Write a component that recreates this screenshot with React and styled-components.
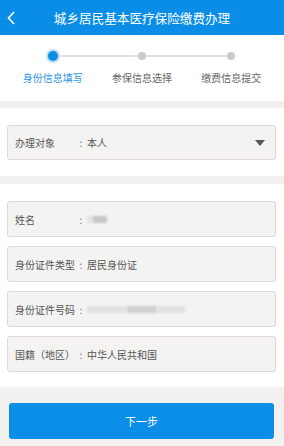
import styled, { createGlobalStyle } from 'styled-components';

const GlobalStyle = createGlobalStyle`
  html, body {
    margin: 0;
    padding: 0;
    background: #f2f1ef;
  }
  body {
    font-family: 'Noto Sans CJK SC', 'Noto Sans', sans-serif;
    color: #555;
  }
`;

const Page = styled.div`
  width: 284px;
  height: 446px;
  display: flex;
  flex-direction: column;
  background: #f2f1ef;
  overflow: hidden;
`;

const Header = styled.div`
  height: 35px;
  flex-shrink: 0;
  background: #0a8de6;
  display: grid;
  grid-template-columns: 30px 1fr 30px;
  align-items: center;
  color: #fff;
`;

const BackButton = styled.div`
  display: flex;
  align-items: center;
  padding-left: 6px;
  height: 100%;
`;

const Title = styled.div`
  text-align: center;
  font-size: 12.6px;
  line-height: 35px;
`;

const Section = styled.div`
  background: ${(p) => (p.$gray ? 'transparent' : '#fff')};
  padding: ${(p) => p.$pad || '17px 8px 16px 7px'};
  margin-bottom: ${(p) => (p.$gray ? '0' : '8px')};
  display: flex;
  flex-direction: column;
  gap: 9px;
`;

const Stepper = styled.div`
  position: relative;
  display: grid;
  grid-template-columns: repeat(3, 1fr);
  padding: 15px 8px 16px;
  background: #fff;
  margin-bottom: 7px;
`;

const Connector = styled.div`
  position: absolute;
  top: 20px;
  left: 52px;
  right: 53px;
  height: 2px;
  background: #e2dfdb;
`;

const Step = styled.div`
  position: relative;
  display: flex;
  flex-direction: column;
  align-items: center;
`;

const DotWrap = styled.div`
  height: 12px;
  display: flex;
  align-items: center;
  justify-content: center;
`;

const Dot = styled.div`
  width: ${(p) => (p.$active ? '10px' : '8px')};
  height: ${(p) => (p.$active ? '10px' : '8px')};
  border-radius: 50%;
  background: ${(p) => (p.$active ? '#0a8de6' : '#ccc8c4')};
  box-shadow: ${(p) => (p.$active ? '0 0 0 2px #bfe0f7' : 'none')};
`;

const StepLabel = styled.div`
  margin-top: 9px;
  font-size: 10px;
  line-height: 14px;
  color: ${(p) => (p.$active ? '#2b95e3' : '#666')};
`;

const Field = styled.div`
  height: ${(p) => p.$h || 36}px;
  box-sizing: border-box;
  border: 1px solid #dcd9d5;
  border-radius: 3px;
  background: #f4f3f1;
  display: flex;
  align-items: center;
  padding: 0 10px 0 7px;
  font-size: 10px;
  color: #555;
`;

const Label = styled.span`
  width: 60px;
  flex-shrink: 0;
  white-space: nowrap;
`;

const Colon = styled.span`
  width: 12px;
  flex-shrink: 0;
  text-align: center;
  color: #777;
`;

const Value = styled.span`
  flex: 1;
  display: flex;
  align-items: center;
`;

const Blur = styled.span`
  display: inline-block;
  width: ${(p) => p.$w}px;
  height: 7px;
  background: ${(p) => p.$c || '#dcdad8'};
  filter: blur(1.2px);
`;

const Caret = styled.span`
  width: 0;
  height: 0;
  border-left: 5px solid transparent;
  border-right: 5px solid transparent;
  border-top: 6px solid #555;
`;

const NextButton = styled.button`
  height: 36px;
  border: none;
  border-radius: 3px;
  background: #0a8ee8;
  color: #fff;
  font-family: inherit;
  font-size: 11px;
  padding: 0;
  cursor: pointer;
`;

const steps = ['身份信息填写', '参保信息选择', '缴费信息提交'];

export default function App() {
  return (
    <Page>
      <GlobalStyle />
      <Header>
        <BackButton>
          <svg width="10" height="14" viewBox="0 0 10 14">
            <path d="M8 1 L2.5 7 L8 13" fill="none" stroke="#fff" strokeWidth="1.6" />
          </svg>
        </BackButton>
        <Title>城乡居民基本医疗保险缴费办理</Title>
        <span />
      </Header>

      <Stepper>
        <Connector />
        {steps.map((s, i) => (
          <Step key={s}>
            <DotWrap>
              <Dot $active={i === 0} />
            </DotWrap>
            <StepLabel $active={i === 0}>{s}</StepLabel>
          </Step>
        ))}
      </Stepper>

      <Section>
        <Field $h={35}>
          <Label>办理对象</Label>
          <Colon>:</Colon>
          <Value>本人</Value>
          <Caret />
        </Field>
      </Section>

      <Section $pad="17px 8px 15px 7px">
        <Field>
          <Label>姓名</Label>
          <Colon>:</Colon>
          <Value>
            <Blur $w={6} $c="#e6e4e2" />
            <Blur $w={14} $c="#c9c7c5" />
          </Value>
        </Field>
        <Field>
          <Label>身份证件类型</Label>
          <Colon>:</Colon>
          <Value>居民身份证</Value>
        </Field>
        <Field>
          <Label>身份证件号码</Label>
          <Colon>:</Colon>
          <Value>
            <Blur $w={40} $c="#e4e2e0" />
            <Blur $w={30} $c="#d2d0ce" />
            <Blur $w={28} $c="#e2e0de" />
          </Value>
        </Field>
        <Field>
          <Label>国籍（地区）</Label>
          <Colon>:</Colon>
          <Value>中华人民共和国</Value>
        </Field>
      </Section>

      <Section $pad="8px 10px 16px 9px" $gray>
        <NextButton>下一步</NextButton>
      </Section>
    </Page>
  );
}
